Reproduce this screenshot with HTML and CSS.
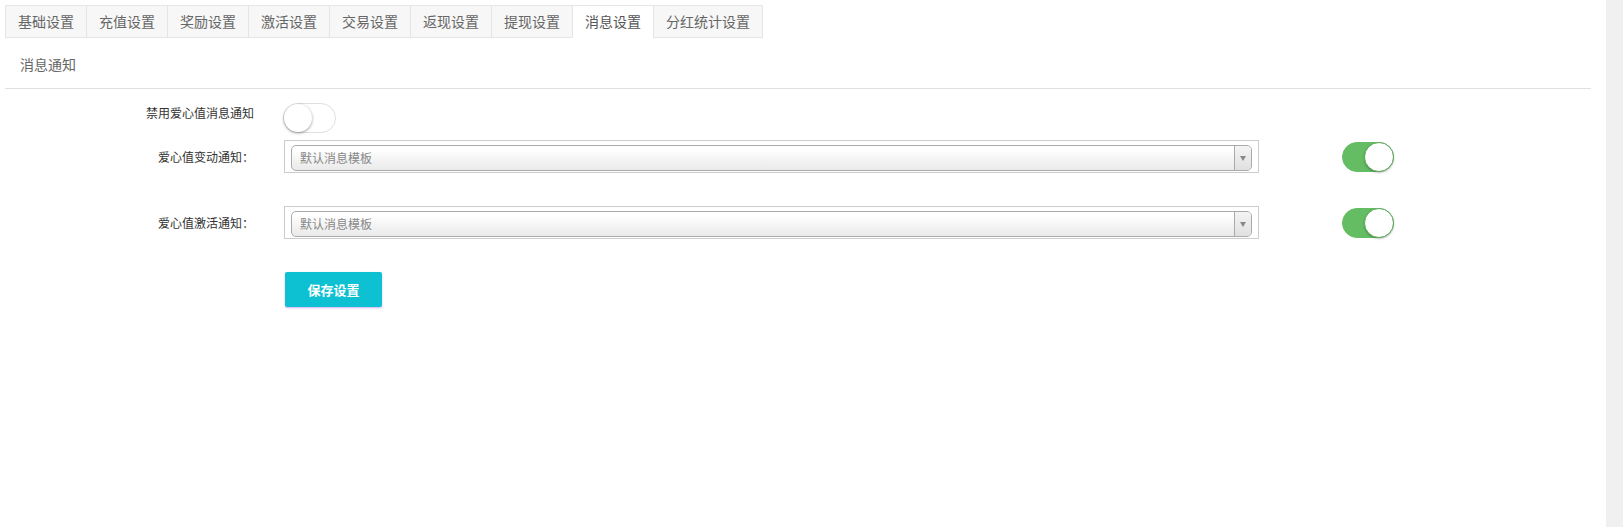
FILE: index.html
```html
<!DOCTYPE html>
<html lang="zh-CN">
<head>
    <meta charset="UTF-8">
    <meta name="viewport" content="width=device-width, initial-scale=1.0">
    <title>消息设置</title>
    <link rel="stylesheet" href="styles.css">
</head>
<body>
    <div class="page">
        <div class="main">
            <!-- 标签栏 -->
            <ul class="tabs">
                <li class="tab">基础设置</li>
                <li class="tab">充值设置</li>
                <li class="tab">奖励设置</li>
                <li class="tab">激活设置</li>
                <li class="tab">交易设置</li>
                <li class="tab">返现设置</li>
                <li class="tab">提现设置</li>
                <li class="tab active">消息设置</li>
                <li class="tab">分红统计设置</li>
            </ul>

            <div class="panel">
                <div class="panel-heading">消息通知</div>
                <div class="panel-body">
                    <div class="form-row row-top">
                        <label class="form-label">禁用爱心值消息通知</label>
                        <div class="form-control">
                            <span class="switch"><span class="knob"></span></span>
                        </div>
                    </div>

                    <div class="form-row">
                        <label class="form-label">爱心值变动通知：</label>
                        <div class="select-wrap">
                            <div class="select">
                                <span class="select-text">默认消息模板</span>
                                <span class="select-arrow"><b></b></span>
                            </div>
                        </div>
                        <span class="switch on"><span class="knob"></span></span>
                    </div>

                    <div class="form-row">
                        <label class="form-label">爱心值激活通知：</label>
                        <div class="select-wrap">
                            <div class="select">
                                <span class="select-text">默认消息模板</span>
                                <span class="select-arrow"><b></b></span>
                            </div>
                        </div>
                        <span class="switch on"><span class="knob"></span></span>
                    </div>

                    <div class="form-row">
                        <span class="form-label"></span>
                        <button class="btn-save">保存设置</button>
                    </div>
                </div>
            </div>
        </div>
        <div class="scrollbar"></div>
    </div>
</body>
</html>
```

FILE: styles.css
```css
html, body {
    margin: 0;
    height: 100%;
    overflow: hidden;
}
body {
    font-family: "Noto Sans CJK SC", "Liberation Sans", sans-serif;
    background: #fff;
    color: #333;
}
.page {
    display: flex;
    height: 100%;
}
.main {
    flex: 1;
    padding: 5px 15px 0 5px;
}
.scrollbar {
    width: 17px;
    background: #f0f0f0;
}
.tabs {
    display: flex;
    list-style: none;
    margin: 0;
    padding: 0;
}
.tab {
    font-size: 14px;
    line-height: 31px;
    padding: 0 12px;
    color: #666;
    background: #f7f7f7;
    border: 1px solid #e5e5e5;
    margin-right: -1px;
}
.tab.active {
    background: #fff;
    border-bottom-color: #fff;
    color: #555;
}
.panel-heading {
    font-size: 14px;
    color: #666;
    padding: 0 15px;
    height: 50px;
    line-height: 53px;
    border-bottom: 1px solid #e0e0e0;
}
.panel-body {
    padding-top: 14px;
}
.form-row {
    display: flex;
    align-items: center;
    margin-bottom: 33px;
}
.form-row.row-top {
    align-items: flex-start;
    margin-bottom: 7px;
}
.row-top .form-label {
    padding-top: 2px;
}
.form-label {
    width: 249px;
    flex-shrink: 0;
    text-align: right;
    font-size: 12px;
    line-height: 16px;
    color: #333;
}
.form-control {
    margin-left: 29px;
}
.select-wrap {
    margin-left: 30px;
    width: 961px;
    padding: 4px 6px 1px 6px;
    border: 1px solid #ccc;
}
.select {
    display: flex;
    height: 24px;
    border: 1px solid #aaa;
    border-radius: 5px;
    background: linear-gradient(#fff 15%, #f3f3f3 60%, #eaeaea 100%);
    overflow: hidden;
}
.select-text {
    flex: 1;
    font-size: 12px;
    line-height: 24px;
    color: #888;
    padding-left: 8px;
}
.select-arrow {
    width: 16px;
    border-left: 1px solid #aaa;
    background: linear-gradient(#f4f4f4, #e0e0e0);
    display: flex;
    align-items: center;
    justify-content: center;
}
.select-arrow b {
    width: 0;
    height: 0;
    border-left: 3px solid transparent;
    border-right: 3px solid transparent;
    border-top: 5px solid #888;
}
.switch {
    display: block;
    position: relative;
    width: 51px;
    height: 28px;
    border: 1px solid #dfdfdf;
    border-radius: 16px;
    background: #fff;
}
.switch .knob {
    position: absolute;
    top: 0;
    left: 0;
    width: 28px;
    height: 28px;
    border-radius: 50%;
    background: #fff;
    box-shadow: 0 1px 3px rgba(0, 0, 0, 0.4);
}
.switch.on {
    margin-left: 83px;
    background: #64bd63;
    border-color: #64bd63;
    width: 50px;
}
.switch.on .knob {
    left: auto;
    right: -1px;
    top: -1px;
    width: 30px;
    height: 30px;
    box-sizing: border-box;
    border: 1px solid #5aa85a;
    box-shadow: 0 1px 2px rgba(0, 0, 0, 0.25);
}
.btn-save {
    margin-left: 31px;
    width: 97px;
    height: 35px;
    border: none;
    border-radius: 2px;
    background: #0dc1d3;
    color: #fff;
    font-family: "Noto Sans CJK SC", sans-serif;
    font-size: 13px;
    font-weight: bold;
    box-shadow: 0 1px 2px rgba(180, 120, 230, 0.6);
}
```
